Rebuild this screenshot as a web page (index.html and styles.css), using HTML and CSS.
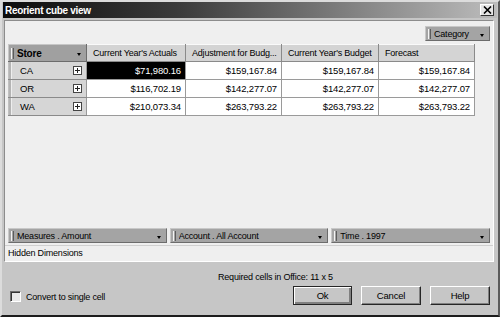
FILE: index.html
```html
<!DOCTYPE html>
<html lang="en">
<head>
  <meta charset="UTF-8" />
  <title>Reorient cube view</title>
  <link rel="stylesheet" href="styles.css">
</head>
<body>
  <div class="window">
    <div class="titlebar">
      <span class="title">Reorient cube view</span>
      <span class="close">
        <svg width="9" height="8" viewBox="0 0 9 8"><path d="M1 0.5 L8 7.5 M8 0.5 L1 7.5" stroke="#000" stroke-width="1.6"/></svg>
      </span>
    </div>

    <div class="panel">
      <div class="page-dims">
        <div class="dim dim-small"><span class="grip"></span><span class="dim-label">Category</span><span class="arrow"></span></div>
      </div>

      <table class="grid">
        <colgroup>
          <col class="w-head"><col class="w1"><col class="w2"><col class="w3"><col class="w4">
        </colgroup>
        <tr>
          <th class="store"><div class="cell-in"><span class="grip"></span><span class="dim-label">Store</span><span class="arrow"></span></div></th>
          <th class="col">Current Year's Actuals</th>
          <th class="col">Adjustment for Budg...</th>
          <th class="col">Current Year's Budget</th>
          <th class="col">Forecast</th>
        </tr>
        <tr>
          <td class="rowhead"><div class="cell-in"><span class="rgrip"></span><span class="rlabel">CA</span><span class="plus"></span></div></td>
          <td class="val sel">$71,980.16</td>
          <td class="val">$159,167.84</td>
          <td class="val">$159,167.84</td>
          <td class="val">$159,167.84</td>
        </tr>
        <tr>
          <td class="rowhead"><div class="cell-in"><span class="rgrip"></span><span class="rlabel">OR</span><span class="plus"></span></div></td>
          <td class="val">$116,702.19</td>
          <td class="val">$142,277.07</td>
          <td class="val">$142,277.07</td>
          <td class="val">$142,277.07</td>
        </tr>
        <tr>
          <td class="rowhead"><div class="cell-in"><span class="rgrip"></span><span class="rlabel">WA</span><span class="plus"></span></div></td>
          <td class="val">$210,073.34</td>
          <td class="val">$263,793.22</td>
          <td class="val">$263,793.22</td>
          <td class="val">$263,793.22</td>
        </tr>
      </table>

      <div class="filler"></div>

      <div class="filter-dims">
        <div class="dim"><span class="grip"></span><span class="dim-label">Measures . Amount</span><span class="arrow"></span></div>
        <div class="dim"><span class="grip"></span><span class="dim-label">Account . All Account</span><span class="arrow"></span></div>
        <div class="dim"><span class="grip"></span><span class="dim-label">Time . 1997</span><span class="arrow"></span></div>
      </div>
      <div class="hidden-dims">Hidden Dimensions</div>
    </div>

    <div class="footer">
      <div class="required">Required cells in Office: 11 x 5</div>
      <div class="actions">
        <label class="check"><span class="box"></span>Convert to single cell</label>
        <div class="buttons">
          <button class="btn default">Ok</button>
          <button class="btn">Cancel</button>
          <button class="btn">Help</button>
        </div>
      </div>
    </div>
  </div>
</body>
</html>
```
FILE: styles.css
```css
body {
  margin: 0;
  font-family: "Liberation Sans", Arial, sans-serif;
  font-size: 9px;
  letter-spacing: -0.2px;
  color: #000;
  background: #c6c6c6;
}
.window {
  width: 500px;
  height: 317px;
  box-sizing: border-box;
  background: #c6c6c6;
  border: 2px solid;
  border-color: #dcdcdc #5a5a5a #1c1c1c #dcdcdc;
  display: flex;
  flex-direction: column;
}
.titlebar {
  height: 16px;
  margin: 0 1px;
  padding: 0 3px 0 2px;
  background: linear-gradient(to right, #0c0c0c, #3a3a3a 35%, #bcbcbc);
  display: flex;
  align-items: center;
  justify-content: space-between;
}
.title {
  color: #fff;
  font-weight: bold;
  font-size: 10px;
  letter-spacing: -0.3px;
}
.close {
  width: 12px;
  height: 10px;
  background: #e6e6e6;
  border: 1px solid;
  border-color: #fff #333 #333 #fff;
  display: flex;
  align-items: center;
  justify-content: center;
}
.panel {
  margin: 2px 4px 0 2px;
  height: 240px;
  background: #efefef;
  border: 1px solid;
  border-color: #8c8c8c #fff #fff #8c8c8c;
  display: flex;
  flex-direction: column;
}
.page-dims {
  display: flex;
  justify-content: flex-end;
  padding: 5px 3px 0 0;
}
.dim {
  height: 15px;
  box-sizing: border-box;
  background: #a4a4a4;
  border: 1px solid;
  border-color: #c8c8c8 #6c6c6c #6c6c6c #c8c8c8;
  display: flex;
  align-items: center;
  padding: 0 5px 0 2px;
}
.dim-small {
  width: 65px;
}
.grip {
  width: 1px;
  height: 10px;
  border-left: 1px solid #f4f4f4;
  border-right: 1px solid #5c5c5c;
  margin-right: 3px;
}
.dim-label {
  flex: 1;
  white-space: nowrap;
  overflow: hidden;
}
.arrow {
  width: 0;
  height: 0;
  border-left: 2.5px solid transparent;
  border-right: 2.5px solid transparent;
  border-top: 3px solid #000;
  margin-top: 3px;
}
.grid {
  border-collapse: collapse;
  margin: 3px 0 0 3px;
  table-layout: fixed;
  width: 466px;
}
.w-head { width: 78px; }
.w1 { width: 99px; }
.w2 { width: 96px; }
.w3 { width: 97px; }
.w4 { width: 96px; }
.grid th,
.grid td {
  padding: 0;
  white-space: nowrap;
  overflow: hidden;
}
.grid th {
  height: 16px;
  font-weight: normal;
  text-align: left;
}
.cell-in {
  display: flex;
  align-items: center;
  height: 100%;
}
.grid th.store {
  background: #a0a0a0;
  font-weight: bold;
  font-size: 10px;
  border: 1px solid;
  border-color: #c6c6c6 #6c6c6c #6c6c6c #c6c6c6;
  padding: 0 5px 0 2px;
}
.store .grip {
  height: 11px;
}
.grid th.col {
  background: #d4d4d4;
  padding-left: 6px;
  border-top: 1px solid #fafafa;
  border-right: 1px solid #8a8a8a;
  border-bottom: 1px solid #8a8a8a;
}
.grid td {
  height: 17px;
}
.rowhead {
  background: #d6d6d6;
  border-bottom: 1px solid #8a8a8a;
  border-left: 1px solid #c0c0c0;
  padding-right: 4px !important;
}
.rowhead .cell-in {
  height: 17px;
}
.rgrip {
  width: 2px;
  height: 100%;
  background: #b4b4b4;
  border-right: 1px solid #eeeeee;
  margin-right: 8px;
}
.rlabel {
  flex: 1;
  font-size: 9.5px;
}
.plus {
  width: 7px;
  height: 7px;
  border: 1px solid #444;
  background:
    linear-gradient(#222, #222) center / 5px 1px no-repeat,
    linear-gradient(#222, #222) center / 1px 5px no-repeat,
    #fff;
}
.val {
  background: #fff;
  text-align: right;
  padding-right: 4px !important;
  border: 1px solid #9a9a9a;
  font-size: 9.5px;
  letter-spacing: -0.15px;
}
.val.sel {
  background: #000;
  color: #fff;
}
.filler {
  flex: 1;
}
.filter-dims {
  display: grid;
  grid-template-columns: repeat(3, 1fr);
  gap: 3px;
  padding: 0 3px 0 3px;
}
.hidden-dims {
  margin-top: 2px;
  height: 15px;
  line-height: 14px;
  padding-left: 3px;
  border-top: 1px solid #d0d0d0;
}
.footer {
  flex: 1;
  padding: 10px 8px 0 8px;
}
.required {
  padding-left: 208px;
  height: 14px;
}
.actions {
  display: flex;
  align-items: center;
  justify-content: space-between;
}
.check {
  display: flex;
  align-items: center;
  gap: 5px;
  margin-top: 2px;
}
.box {
  width: 9px;
  height: 9px;
  background: #e8e8e8;
  border: 1px solid;
  border-color: #6c6c6c #fff #fff #6c6c6c;
  box-shadow: inset 1px 1px 0 #333;
}
.buttons {
  display: flex;
  gap: 9px;
}
.btn {
  width: 60px;
  height: 19px;
  font-family: inherit;
  font-size: 9.5px;
  letter-spacing: -0.2px;
  background: #c6c6c6;
  border: 1px solid;
  border-color: #fff #262626 #262626 #fff;
  box-shadow: inset -1px -1px 0 #808080;
  padding: 0;
}
.btn.default {
  width: 59px;
  border-color: #262626;
  box-shadow: inset 1px 1px 0 #fff, inset -2px -2px 0 #808080;
}
```
